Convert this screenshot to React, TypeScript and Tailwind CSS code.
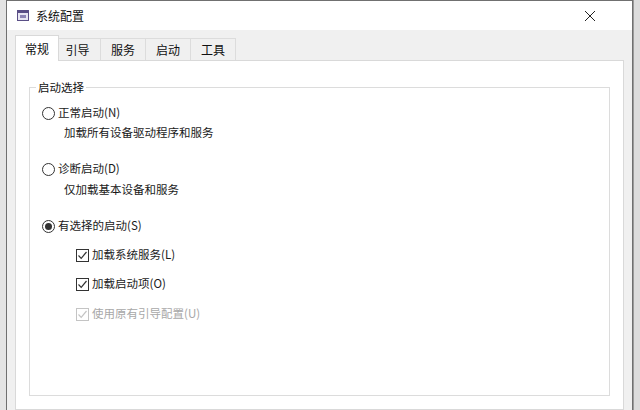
import React from "react";

const font = { fontFamily: '"Noto Sans CJK SC", "Liberation Sans", sans-serif' };

function Radio({ checked, label }: { checked?: boolean; label: string }) {
  return (
    <div className="flex items-center h-[20px] pl-[12px]">
      <span className="w-[13px] h-[13px] rounded-full border border-[#333] bg-white flex items-center justify-center">
        {checked && <span className="w-[7px] h-[7px] rounded-full bg-[#333]" />}
      </span>
      <span className="ml-[3px] text-[11.5px] text-[#1a1a1a]">{label}</span>
    </div>
  );
}

function Check({ label, disabled }: { label: string; disabled?: boolean }) {
  const c = disabled ? "#c4c4c4" : "#333";
  return (
    <div className="flex items-center h-[20px] pl-[46px]">
      <svg width="13" height="13" viewBox="0 0 13 13">
        <rect x="0.5" y="0.5" width="12" height="12" fill="white" stroke={c} />
        <path d="M2.5 6.5 L5.2 9.3 L10.5 3" fill="none" stroke={c} strokeWidth="1.2" />
      </svg>
      <span className={`ml-[3px] text-[11.5px] ${disabled ? "text-[#a8a8a8]" : "text-[#1a1a1a]"}`}>{label}</span>
    </div>
  );
}

export default function App() {
  const tabs = ["引导", "服务", "启动", "工具"];
  return (
    <div className="w-[640px] h-[410px] flex bg-[#e8e8e8] overflow-hidden" style={font}>
      <div className="w-[6px] bg-[#e4e4e4]" />
      <div className="w-[627px] flex flex-col border-l border-t border-r border-[#707070] bg-[#f0f0f0]">
        {/* title bar */}
        <div className="h-[29px] bg-white flex items-center shrink-0">
          <svg className="ml-[10px]" width="12" height="12" viewBox="0 0 12 12">
            <rect x="0.5" y="0.5" width="11" height="10" fill="#e8e6f3" stroke="#5a4f86" />
            <rect x="0.5" y="0.5" width="11" height="2.5" fill="#5a4f86" />
            <rect x="3" y="5" width="6" height="3" fill="#8d85b5" />
          </svg>
          <span className="ml-[7px] text-[12px] text-[#111]">系统配置</span>
          <svg className="ml-auto mr-[36px]" width="12" height="12" viewBox="0 0 12 12">
            <path d="M1 1 L11 11 M11 1 L1 11" stroke="#222" strokeWidth="1" />
          </svg>
        </div>
        {/* tabs */}
        <div className="flex items-end h-[30px] pl-[8px] shrink-0">
          <div className="h-[26px] w-[44px] bg-white border border-b-0 border-[#d9d9d9] flex items-center justify-center text-[12px] text-[#111] relative -mb-px z-10">
            常规
          </div>
          {tabs.map((t, i) => (
            <div
              key={t}
              className={`h-[22px] ${i === 0 ? "w-[42px] pr-[4px]" : "w-[45px]"} bg-[#f0f0f0] border border-l-0 border-b-0 border-[#dcdcdc] flex items-center justify-center text-[12px] text-[#111]`}
            >
              {t}
            </div>
          ))}
        </div>
        {/* panel */}
        <div className="ml-[8px] mr-[8px] flex-1 bg-white border border-[#d9d9d9] pt-[26px] px-[13px]">
          <div className="relative border border-[#dcdcdc] h-[309px] w-[581px]">
            <span className="absolute -top-[9px] left-[6px] bg-white px-[2px] text-[11.5px] text-[#111] leading-[16px]">
              启动选择
            </span>
            <div className="flex flex-col pt-[15px]">
              <Radio label="正常启动(N)" />
              <div className="h-[20px] flex items-center pl-[34px] text-[11.5px] text-[#1a1a1a]">加载所有设备驱动程序和服务</div>
              <div className="mt-[16px]">
                <Radio label="诊断启动(D)" />
              </div>
              <div className="mt-[1px] h-[20px] flex items-center pl-[34px] text-[11.5px] text-[#1a1a1a]">仅加载基本设备和服务</div>
              <div className="mt-[16px]">
                <Radio checked label="有选择的启动(S)" />
              </div>
              <div className="mt-[9px]">
                <Check label="加载系统服务(L)" />
              </div>
              <div className="mt-[9px]">
                <Check label="加载启动项(O)" />
              </div>
              <div className="mt-[10px]">
                <Check disabled label="使用原有引导配置(U)" />
              </div>
            </div>
          </div>
        </div>
      </div>
      <div className="flex-1 bg-[#dcdcdc] border-l border-[#9a9a9a]" />
    </div>
  );
}
